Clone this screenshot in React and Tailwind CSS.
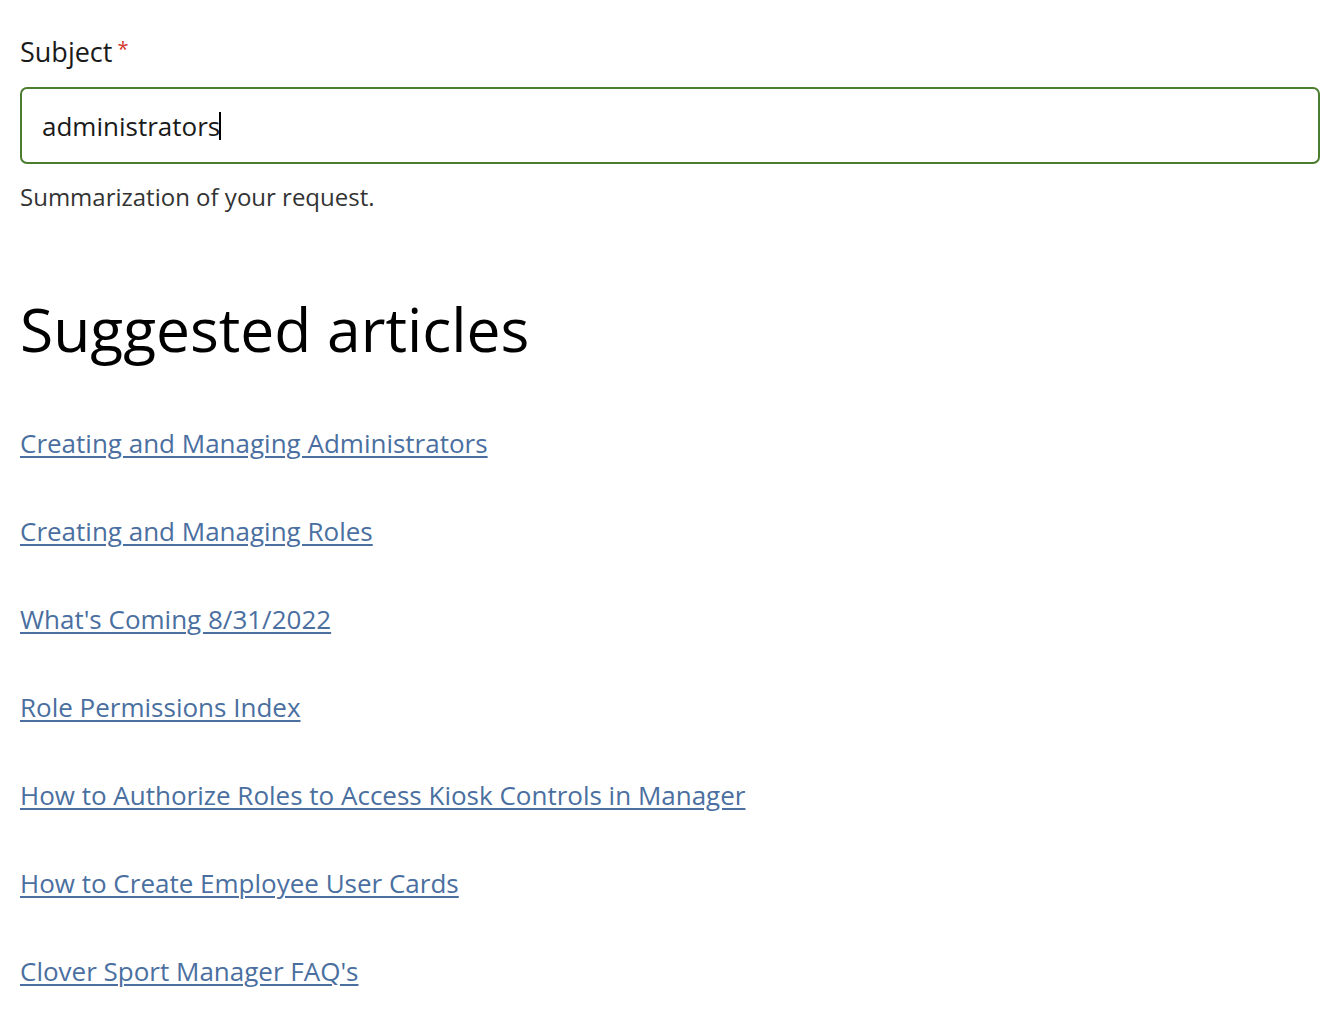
import React from "react";

const articles = [
  "Creating and Managing Administrators",
  "Creating and Managing Roles",
  "What's Coming 8/31/2022",
  "Role Permissions Index",
  "How to Authorize Roles to Access Kiosk Controls in Manager",
  "How to Create Employee User Cards",
  "Clover Sport Manager FAQ's",
];

export default function App() {
  return (
    <div className="min-h-screen bg-white pl-5 pr-4 pt-[34px] font-['Open_Sans',sans-serif]">
      <label className="flex items-start text-[27px] leading-[36px] text-[#1a1a1a]">
        <span>Subject</span>
        <span className="ml-[5px] mt-[2px] text-[20px] leading-[26px] text-[#d1382e]">*</span>
      </label>
      <div className="mt-[17px] flex h-[77px] items-center rounded-[7px] border-2 border-[#4b7d2f] pl-5">
        <span className="text-[26px] leading-[36px] text-[#1a1a1a]">administrators</span>
        <span className="ml-[-1px] h-[28px] w-[2px] bg-black" />
      </div>
      <p className="mt-[17px] text-[24px] leading-[32px] text-[#333333]">Summarization of your request.</p>
      <h2 className="mt-[80px] text-[60.5px] leading-[72px] font-normal text-black">Suggested articles</h2>
      <ul className="mt-[60px] flex flex-col gap-[52px]">
        {articles.map((a) => (
          <li key={a} className="text-[26px] leading-[36px]">
            <a href="#" className="text-[#4a6fa0] underline underline-offset-[3px] decoration-[1.5px]">
              {a}
            </a>
          </li>
        ))}
      </ul>
    </div>
  );
}
